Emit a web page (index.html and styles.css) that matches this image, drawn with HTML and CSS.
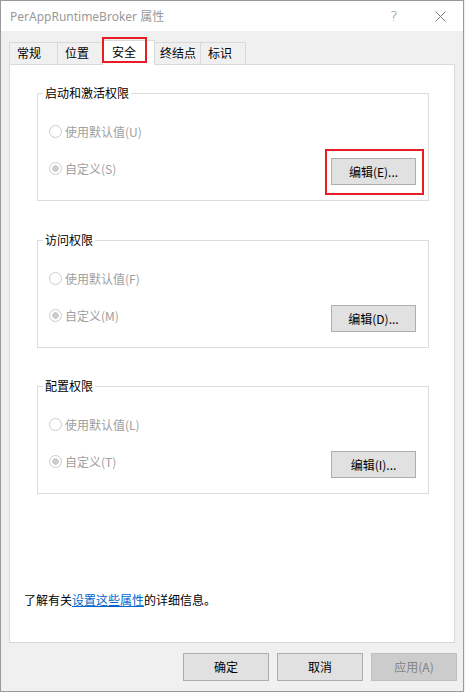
FILE: index.html
```html
<!DOCTYPE html>
<html lang="zh-CN">
<head>
    <meta charset="UTF-8">
    <title>PerAppRuntimeBroker 属性</title>
    <link rel="stylesheet" href="styles.css">
</head>
<body>

<div class="window">
    <div class="titlebar">
        <div class="title">PerAppRuntimeBroker 属性</div>
        <div class="caption-btn help">?</div>
        <div class="caption-btn close">
            <svg width="11" height="11" viewBox="0 0 11 11"><path d="M0.5 0.5 L10.5 10.5 M10.5 0.5 L0.5 10.5" stroke="#7a7a7a" stroke-width="1" fill="none"/></svg>
        </div>
    </div>

    <div class="client">
        <div class="tabs">
            <div class="tab">常规</div>
            <div class="tab">位置</div>
            <div class="tab selected">安全<span class="mark mark-tab"></span></div>
            <div class="tab wide">终结点</div>
            <div class="tab">标识</div>
        </div>

        <div class="panel">
            <div class="group">
                <div class="group-title">启动和激活权限</div>
                <div class="row first">
                    <span class="radio"></span>使用默认值(U)
                </div>
                <div class="row second">
                    <div class="option"><span class="radio checked"></span>自定义(S)</div>
                    <div class="btn edit">编辑(E)...<span class="mark mark-btn"></span></div>
                </div>
            </div>

            <div class="group">
                <div class="group-title">访问权限</div>
                <div class="row first">
                    <span class="radio"></span>使用默认值(F)
                </div>
                <div class="row second">
                    <div class="option"><span class="radio checked"></span>自定义(M)</div>
                    <div class="btn edit">编辑(D)...</div>
                </div>
            </div>

            <div class="group last">
                <div class="group-title">配置权限</div>
                <div class="row first">
                    <span class="radio"></span>使用默认值(L)
                </div>
                <div class="row second">
                    <div class="option"><span class="radio checked"></span>自定义(T)</div>
                    <div class="btn edit">编辑(I)...</div>
                </div>
            </div>

            <p class="info">了解有关<a href="#">设置这些属性</a>的详细信息。</p>
        </div>

        <div class="buttons">
            <div class="btn">确定</div>
            <div class="btn">取消</div>
            <div class="btn disabled">应用(A)</div>
        </div>
    </div>
</div>

</body>
</html>
```

FILE: styles.css
```css
body {
    margin: 0;
    background: #f0f0f0;
    font-family: "Noto Sans CJK SC", "Noto Sans", sans-serif;
    font-size: 12px;
    color: #000;
}
.window {
    width: 462px;
    height: 690px;
    border: 1px solid #9a9a9a;
    background: #f0f0f0;
    overflow: hidden;
}
.titlebar {
    height: 30px;
    background: #fff;
    display: flex;
    align-items: center;
}
.title {
    flex: 1;
    padding-left: 9px;
    font-family: "Noto Sans", "Noto Sans CJK SC", sans-serif;
    font-size: 12px;
    color: #999;
}
.caption-btn {
    width: 46px;
    height: 30px;
    display: flex;
    align-items: center;
    justify-content: center;
    color: #7a7a7a;
}
.help {
    font-family: "DejaVu Sans", sans-serif;
    font-size: 14px;
    font-weight: 300;
}
.client { padding: 0 0 0 8px; }
.tabs {
    display: flex;
    align-items: flex-end;
    height: 33px;
}
.tab {
    position: relative;
    box-sizing: border-box;
    width: 46px;
    height: 22px;
    padding-left: 7px;
    line-height: 20px;
    border: 1px solid #d9d9d9;
    border-bottom: none;
    margin-left: -1px;
    background: #f0f0f0;
}
.tab:first-child { width: 49px; margin-left: 0; }
.tab.wide { padding-left: 5px; width: 47px; }
.tab.selected {
    width: 53px;
    height: 25px;
    padding-left: 9px;
    line-height: 22px;
    background: #fff;
    margin-bottom: -1px;
    z-index: 1;
}
.mark {
    position: absolute;
    border: 2px solid #e81c24;
}
.mark-tab { left: -1px; top: -4px; width: 41px; height: 22px; }
.mark-btn { left: -7px; top: -10px; width: 95px; height: 42px; }
.panel {
    box-sizing: border-box;
    width: 446px;
    height: 579px;
    background: #fff;
    border: 1px solid #d9d9d9;
    padding: 28px 25px 0 27px;
}
.group {
    box-sizing: border-box;
    height: 108px;
    border: 1px solid #dcdcdc;
    padding: 0 12px 0 11px;
    display: flex;
    flex-direction: column;
    margin-bottom: 39px;
}
.group.last { margin-bottom: 0; }
.group:nth-child(2) { margin-bottom: 38px; }
.group-title {
    align-self: flex-start;
    height: 16px;
    line-height: 16px;
    margin: -9px 0 0 -6px;
    padding: 0 2px;
    background: #fff;
}
.row {
    display: flex;
    align-items: center;
    color: #a0a0a0;
    height: 18px;
}
.row.first { margin-top: 21px; }
.row.second {
    margin-top: 18px;
    height: auto;
    align-items: flex-start;
    justify-content: space-between;
}
.option {
    display: flex;
    align-items: center;
    height: 18px;
    margin-top: 1px;
}
.radio {
    box-sizing: border-box;
    width: 13px;
    height: 13px;
    border: 1px solid #cccccc;
    border-radius: 50%;
    background: #fff;
    margin-right: 3px;
}
.radio.checked {
    background: radial-gradient(circle, #cccccc 0, #cccccc 3px, #fff 3.6px);
}
.btn {
    position: relative;
    box-sizing: border-box;
    width: 86px;
    height: 28px;
    line-height: 26px;
    text-align: center;
    background: #e1e1e1;
    border: 1px solid #adadad;
    color: #000;
}
.btn.edit { width: 85px; height: 27px; line-height: 25px; }
.btn.disabled {
    background: #cccccc;
    border-color: #bfbfbf;
    color: #838383;
}
.info {
    margin: 98px 0 0 -13px;
    line-height: 16px;
}
.info a {
    color: #0066cc;
    text-decoration: underline;
}
.buttons {
    display: flex;
    justify-content: flex-end;
    gap: 8px;
    padding: 10px 6px 0 0;
}
```
